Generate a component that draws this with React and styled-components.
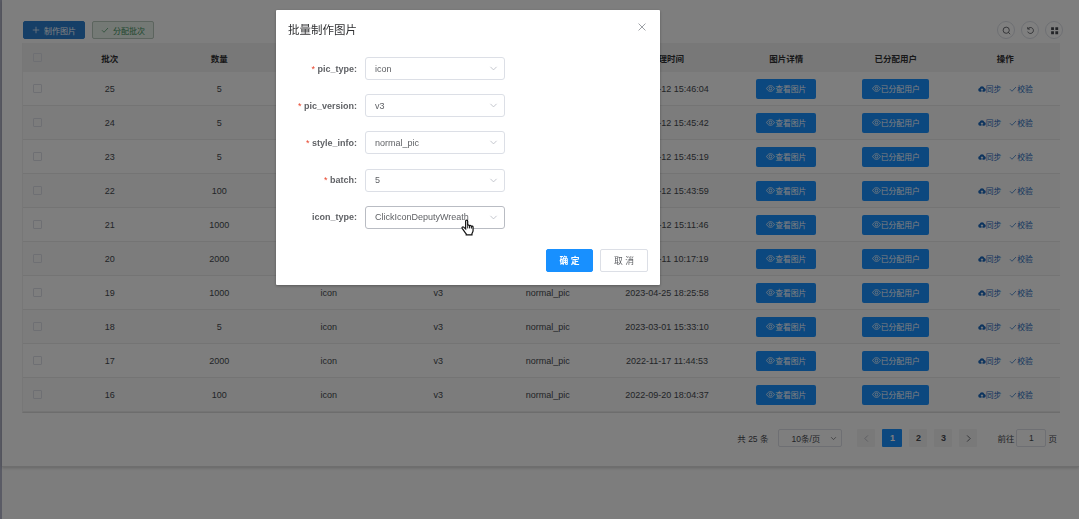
import React, { useState } from "react";
import styled, { createGlobalStyle } from "styled-components";

const ROWS = [
  { id: 25, amount: 5, time: "2023-05-12 15:46:04" },
  { id: 24, amount: 5, time: "2023-05-12 15:45:42" },
  { id: 23, amount: 5, time: "2023-05-12 15:45:19" },
  { id: 22, amount: 100, time: "2023-05-12 15:43:59" },
  { id: 21, amount: 1000, time: "2023-05-12 15:11:46" },
  { id: 20, amount: 2000, time: "2023-05-11 10:17:19" },
  { id: 19, amount: 1000, time: "2023-04-25 18:25:58" },
  { id: 18, amount: 5, time: "2023-03-01 15:33:10" },
  { id: 17, amount: 2000, time: "2022-11-17 11:44:53" },
  { id: 16, amount: 100, time: "2022-09-20 18:04:37" },
];

const HEADERS = ["批次", "数量", "图片类型", "图片版本", "样式信息", "处理时间", "图片详情", "已分配用户", "操作"];

const FIELDS = [
  { label: "pic_type", value: "icon", required: true },
  { label: "pic_version", value: "v3", required: true },
  { label: "style_info", value: "normal_pic", required: true },
  { label: "batch", value: "5", required: true },
  { label: "icon_type", value: "ClickIconDeputyWreath", active: true },
];

const Icon = ({ size = 9, children }) => (
  <svg width={size} height={size} viewBox="0 0 16 16" fill="none" stroke="currentColor" strokeWidth="1.4">
    {children}
  </svg>
);

const EyeIcon = () => (
  <Icon size={9}>
    <path d="M1 8C3 4.5 5.3 3 8 3s5 1.5 7 5c-2 3.500-4.300 5-7 5S3 11.500 1 8z" />
    <circle cx="8" cy="8" r="2.500" />
  </Icon>
);

const CheckIcon = () => (
  <Icon size={8}>
    <path d="M2 8.500l4 4L14 4" />
  </Icon>
);

const CloudIcon = () => (
  <Icon size={8}>
    <path
      d="M4 13.500a3.700 3.700 0 0 1-.7-7.300 4.800 4.800 0 0 1 9.400 0A3.700 3.700 0 0 1 12 13.500H9V10h2L8 6.500 5 10h2v3.500z"
      fill="currentColor"
      stroke="none"
    />
  </Icon>
);

const ArrowIcon = ({ size = 9, d = "M2.500 5L8 10.500 13.500 5" }) => (
  <Icon size={size}>
    <path d={d} />
  </Icon>
);

function TableRow({ row }) {
  return (
    <Row>
      <Cell><Checkbox /></Cell>
      <Cell>{row.id}</Cell>
      <Cell>{row.amount}</Cell>
      <Cell>icon</Cell>
      <Cell>v3</Cell>
      <Cell>normal_pic</Cell>
      <Cell>{row.time}</Cell>
      <Cell><CellButton $width="60px"><EyeIcon />查看图片</CellButton></Cell>
      <Cell><CellButton $width="67px"><EyeIcon />已分配用户</CellButton></Cell>
      <Cell>
        <Links>
          <Link><CloudIcon />同步</Link>
          <Link><CheckIcon />校验</Link>
        </Links>
      </Cell>
    </Row>
  );
}

function App() {
  const [page, setPage] = useState(1);
  const [open, setOpen] = useState(true);

  return (
    <>
      <GlobalStyle />
      <Page>
        <Card>
          <Toolbar>
            <ToolButton $primary>
              <Icon size={8}><path d="M8 1.500v13M1.500 8h13" /></Icon>
              制作图片
            </ToolButton>
            <ToolButton><CheckIcon />分配批次</ToolButton>
            <Tools>
              <RoundButton>
                <Icon><circle cx="7.500" cy="7.500" r="5.500" /><path d="M11.500 11.500l3 3" /></Icon>
              </RoundButton>
              <RoundButton>
                <Icon><path d="M3.500 5A5.300 5.300 0 1 1 3 10M3 2v3.500h4" /></Icon>
              </RoundButton>
              <RoundButton>
                <Icon><path d="M2 2h5v5H2zM9.500 2h5v5h-5zM2 9.500h5v5H2zM9.500 9.500h5v5h-5z" fill="currentColor" stroke="none" /></Icon>
              </RoundButton>
            </Tools>
          </Toolbar>

          <Table>
            <HeadRow>
              <Cell><Checkbox /></Cell>
              {HEADERS.map((text) => <Cell key={text}>{text}</Cell>)}
            </HeadRow>
            {ROWS.map((row) => <TableRow key={row.id} row={row} />)}
          </Table>

          <Pagination>
            <span>共 25 条</span>
            <SizeSelect>
              <span>10条/页</span>
              <ArrowIcon size={7} />
            </SizeSelect>
            <Pager>
              <PageButton $muted><ArrowIcon size={9} d="M10.500 2.500L5 8l5.500 5.500" /></PageButton>
              {[1, 2, 3].map((n) => (
                <PageButton key={n} $active={n === page} onClick={() => setPage(n)}>{n}</PageButton>
              ))}
              <PageButton><ArrowIcon size={9} d="M5.500 2.500L11 8l-5.500 5.500" /></PageButton>
            </Pager>
            <Jumper>
              前往<JumpBox>{page}</JumpBox>页
            </Jumper>
          </Pagination>
        </Card>
      </Page>

      {open && (
        <Overlay>
          <Dialog>
            <DialogHeader>
              <DialogTitle>批量制作图片</DialogTitle>
              <CloseButton onClick={() => setOpen(false)}>
                <Icon size={10}><path d="M2.500 2.500l11 11M13.500 2.500l-11 11" /></Icon>
              </CloseButton>
            </DialogHeader>
            <Form>
              {FIELDS.map((field) => (
                <Field key={field.label}>
                  <Label>{field.required && <Star>*</Star>}{field.label}:</Label>
                  <Select $active={field.active}>
                    <span>{field.value}</span>
                    <ArrowIcon />
                    {field.active && (
                      <Cursor viewBox="0 0 14 18">
                        <path
                          d="M5 10.500V2.200c0-1.600 2.200-1.600 2.200 0V7c.3-.9 1.900-.8 2 .3.4-.8 1.900-.6 2 .5.500-.7 1.800-.3 1.800.8v3.600c0 1.500-.8 2.300-1.200 3.300v1.500H5.600v-1.200C4.300 14.200 3 12.200 1.400 10.100c-.9-1.300.5-2.300 1.500-1.500z"
                          fill="#fff"
                          stroke="#111"
                          strokeWidth="1.3"
                        />
                        <path d="M7.200 7v3M9.200 7.500V10M11.200 8v2.200" stroke="#111" />
                      </Cursor>
                    )}
                  </Select>
                </Field>
              ))}
            </Form>
            <DialogFooter>
              <FooterButton $primary>确 定</FooterButton>
              <FooterButton onClick={() => setOpen(false)}>取 消</FooterButton>
            </DialogFooter>
          </Dialog>
        </Overlay>
      )}
    </>
  );
}

const GlobalStyle = createGlobalStyle`
  * {
    box-sizing: border-box;
  }
  body {
    margin: 0;
    overflow: hidden;
    font-family: "Liberation Sans", "Noto Sans CJK SC", sans-serif;
    font-size: 9px;
    color: #46494f;
  }
  button {
    font-family: inherit;
    padding: 0;
    cursor: pointer;
  }
  svg {
    flex: none;
  }
`;

const Page = styled.div`
  height: 519px;
  border-left: 2px solid #b4b7ca;
  background: #fbfbfb;
`;

const Card = styled.div`
  height: 467px;
  padding: 21px 19px 0 20px;
  background: #fdfdfd;
  border-bottom: 1px solid #dcdcdc;
  box-shadow: 0 1px 3px rgba(0, 0, 0, 0.2);
`;

const Toolbar = styled.div`
  display: flex;
  gap: 7px;
  height: 22px;
  padding-left: 1px;
`;

const ToolButton = styled.button`
  display: flex;
  align-items: center;
  justify-content: center;
  gap: 4px;
  width: 62px;
  height: 18px;
  font-size: 8px;
  border-radius: 2px;
  border: 1px solid ${(props) => (props.$primary ? "#2d7fcf" : "#b8c8bd")};
  background: ${(props) => (props.$primary ? "#2d7fcf" : "#e9f2ea")};
  color: ${(props) => (props.$primary ? "#ffffff" : "#3c8f5c")};
`;

const Tools = styled.div`
  display: flex;
  gap: 6px;
  margin-left: auto;
  margin-right: -3px;
`;

const RoundButton = styled.button`
  display: flex;
  align-items: center;
  justify-content: center;
  width: 18px;
  height: 18px;
  border: 1px solid #dcdfe6;
  border-radius: 50%;
  background: #ffffff;
  color: #46494f;
`;

const Table = styled.div`
  border-left: 1px solid #efefef;
  border-bottom: 1px solid #dadada;
`;

const Row = styled.div`
  display: grid;
  grid-template-columns: 32px repeat(5, 109.5px) 129px repeat(3, 109.5px);
  height: 34px;
  border-bottom: 1px solid #e8e8e8;

  &:nth-child(odd) {
    background: #f8f8f8;
  }
`;

const HeadRow = styled(Row)`
  height: 29px;
  border-bottom: 0;
  font-size: 8.5px;
  font-weight: 600;
  color: #303133;

  &&:nth-child(odd) {
    background: #f1f1f1;
  }
`;

const Cell = styled.div`
  display: flex;
  align-items: center;
  justify-content: center;
  white-space: nowrap;

  &:first-child {
    padding-right: 4px;
  }
`;

const Checkbox = styled.span`
  width: 9px;
  height: 9px;
  border: 1px solid #dcdfe6;
  border-radius: 1px;
`;

const CellButton = styled.button`
  display: flex;
  align-items: center;
  justify-content: center;
  width: ${(props) => props.$width};
  height: 20px;
  border: 0;
  border-radius: 2px;
  font-size: 7.8px;
  background: #1890ff;
  color: #ffffff;
`;

const Links = styled.div`
  display: flex;
  gap: 8px;
`;

const Link = styled.a`
  display: flex;
  align-items: center;
  font-size: 7.8px;
  color: #1c69bd;
`;

const Pagination = styled.div`
  display: flex;
  align-items: center;
  justify-content: flex-end;
  margin-top: 16px;
  padding-right: 3px;
  height: 18px;
  font-size: 8.5px;
`;

const SizeSelect = styled.div`
  display: flex;
  align-items: center;
  justify-content: space-between;
  width: 64px;
  height: 18px;
  margin: 0 15px 0 10px;
  padding: 0 4px 0 12px;
  border: 1px solid #dcdfe6;
  border-radius: 2px;
`;

const Pager = styled.div`
  display: flex;
  gap: 7px;
`;

const PageButton = styled.button`
  display: flex;
  align-items: center;
  justify-content: center;
  width: ${(props) => (props.$active ? "20px" : "18px")};
  height: 18px;
  border: 0;
  border-radius: 1px;
  font-size: 9px;
  font-weight: bold;
  background: ${(props) => (props.$active ? "#1890ff" : "#f2f2f3")};
  color: ${(props) => (props.$active ? "#ffffff" : props.$muted ? "#b0b3ba" : "#46494f")};
`;

const Jumper = styled.div`
  display: flex;
  align-items: center;
  gap: 2px;
  margin-left: 20px;
`;

const JumpBox = styled.span`
  width: 30px;
  height: 18px;
  line-height: 16px;
  text-align: center;
  border: 1px solid #dcdfe6;
  border-radius: 2px;
`;

const Overlay = styled.div`
  position: fixed;
  inset: 0;
  padding: 10px 0 0 276px;
  background: rgba(0, 0, 0, 0.5);
`;

const Dialog = styled.div`
  width: 384px;
  height: 275px;
  border-radius: 1px;
  background: #ffffff;
  box-shadow: 0 1px 3px rgba(0, 0, 0, 0.3);
`;

const DialogHeader = styled.div`
  display: flex;
  justify-content: space-between;
  height: 47px;
  padding: 12px 13px 0 12px;
`;

const DialogTitle = styled.div`
  font-size: 11.5px;
  line-height: 16px;
  color: #303133;
`;

const CloseButton = styled.button`
  display: flex;
  height: 10px;
  border: 0;
  background: none;
  color: #909399;
`;

const Form = styled.div`
  display: flex;
  flex-direction: column;
  gap: 14.2px;
`;

const Field = styled.div`
  display: flex;
  align-items: center;
`;

const Label = styled.div`
  width: 81px;
  margin-right: 8px;
  text-align: right;
  font-weight: bold;
  color: #606266;
`;

const Star = styled.span`
  margin-right: 2.5px;
  font-weight: normal;
  color: #e8452c;
`;

const Select = styled.div`
  position: relative;
  display: flex;
  align-items: center;
  justify-content: space-between;
  width: 140px;
  height: 23px;
  padding: 0 6px 0 9px;
  border: 1px solid ${(props) => (props.$active ? "#b9bcc3" : "#dcdfe6")};
  border-radius: 3px;
  color: #606266;

  > svg:not(:last-child),
  > svg:only-of-type {
    color: #b4b8c0;
  }
`;

const Cursor = styled.svg`
  position: absolute;
  left: 95px;
  top: 12px;
  width: 13px;
  height: 17px;
  fill: none;
`;

const DialogFooter = styled.div`
  display: flex;
  justify-content: flex-end;
  gap: 7px;
  padding: 20px 12px 0 0;
`;

const FooterButton = styled.button`
  width: ${(props) => (props.$primary ? "47px" : "48px")};
  height: 23px;
  border: 1px solid ${(props) => (props.$primary ? "#1890ff" : "#dcdfe6")};
  border-radius: 2px;
  font-size: 8.8px;
  font-weight: ${(props) => (props.$primary ? 600 : 400)};
  background: ${(props) => (props.$primary ? "#1890ff" : "#ffffff")};
  color: ${(props) => (props.$primary ? "#ffffff" : "#606266")};
`;

export default App;
